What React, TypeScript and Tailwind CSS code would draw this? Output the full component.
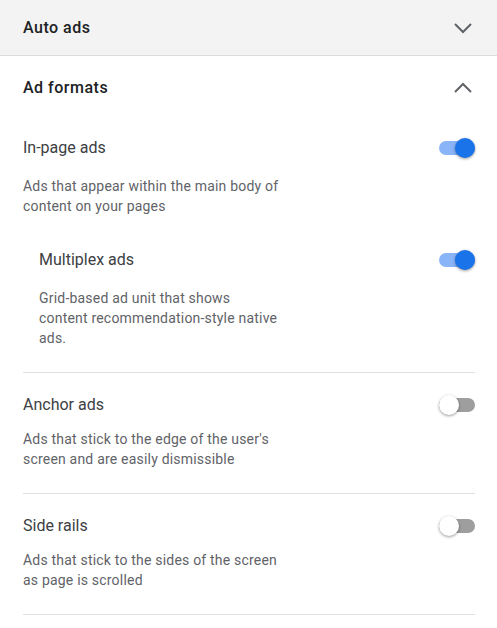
import React from "react";

const Chevron = ({ up }: { up?: boolean }) => (
  <svg width="24" height="24" viewBox="0 0 24 24" className="text-[#5f6368]">
    <path
      d={up ? "M4 16l8-8 8 8" : "M4 8l8 8 8-8"}
      fill="none"
      stroke="currentColor"
      strokeWidth="2"
    />
  </svg>
);

const Toggle = ({ on }: { on: boolean }) => (
  <div className="relative w-[36px] h-[20px] flex items-center shrink-0">
    <div className={`w-[36px] h-[14px] rounded-full ${on ? "bg-[#8ab4f8]" : "bg-[#9e9e9e]"}`} />
    <div
      className={`absolute top-0 w-[20px] h-[20px] rounded-full shadow-[0_1px_3px_rgba(0,0,0,0.4)] ${
        on ? "right-0 bg-[#1a73e8]" : "left-0 bg-white"
      }`}
    />
  </div>
);

interface RowProps {
  title: string;
  desc: string;
  on: boolean;
  descWidth: string;
  gap: string;
}

const Row = ({ title, desc, on, descWidth, gap }: RowProps) => (
  <div>
    <div className="flex items-center justify-between h-[24px]">
      <span className="text-[16px] text-[#3c4043]">{title}</span>
      <Toggle on={on} />
    </div>
    <p className={`${gap} ${descWidth} text-[14px] leading-[20px] tracking-[0.2px] text-[#5f6368]`}>{desc}</p>
  </div>
);

export default function App() {
  return (
    <div className="w-[497px] min-h-[628px] bg-white" style={{ fontFamily: "Roboto, 'Liberation Sans', sans-serif" }}>
      {/* Auto ads */}
      <div className="h-[56px] bg-[#f3f3f3] border-b border-[#dadce0] flex items-center justify-between pl-[23px] pr-[22px]">
        <span className="text-[16px] font-medium tracking-[0.5px] text-[#202124]">Auto ads</span>
        <Chevron />
      </div>

      {/* Ad formats */}
      <div className="h-[64px] flex items-center justify-between pl-[23px] pr-[22px]">
        <span className="text-[16px] font-medium tracking-[0.5px] text-[#202124]">Ad formats</span>
        <Chevron up />
      </div>

      <div className="px-[22px] pl-[23px]">
        <div className="pt-[16px] pb-[24px] border-b border-[#e0e0e0]">
          <Row
            title="In-page ads"
            desc="Ads that appear within the main body of content on your pages"
            on
            descWidth="w-[260px]"
            gap="mt-[16px]"
          />
          <div className="pl-[16px] mt-[32px]">
            <Row
              title="Multiplex ads"
              desc="Grid-based ad unit that shows content recommendation-style native ads."
              on
              descWidth="w-[241px]"
              gap="mt-[16px]"
            />
          </div>
        </div>

        <div className="pt-[20px] pb-[24px] border-b border-[#e0e0e0]">
          <Row
            title="Anchor ads"
            desc="Ads that stick to the edge of the user's screen and are easily dismissible"
            on={false}
            descWidth="w-[260px]"
            gap="mt-[12px]"
          />
        </div>

        <div className="pt-[20px] pb-[24px] border-b border-[#e0e0e0]">
          <Row
            title="Side rails"
            desc="Ads that stick to the sides of the screen as page is scrolled"
            on={false}
            descWidth="w-[260px]"
            gap="mt-[12px]"
          />
        </div>
      </div>
    </div>
  );
}
